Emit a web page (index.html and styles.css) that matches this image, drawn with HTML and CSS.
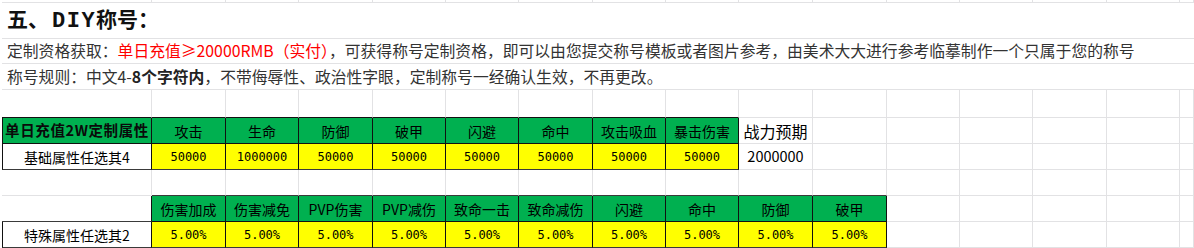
FILE: index.html
```html
<!DOCTYPE html>
<html lang="zh-CN">
<head>
<meta charset="utf-8">
<title>DIY称号</title>
<link rel="stylesheet" href="styles.css">
</head>
<body>
<div class="sheet">
  <!-- row 0 -->
  <div class="c"></div><div class="c"></div><div class="c"></div><div class="c"></div>
  <div class="c"></div><div class="c"></div><div class="c"></div><div class="c"></div>
  <div class="c"></div><div class="c"></div><div class="c"></div><div class="c"></div>
  <div class="c"></div><div class="c"></div><div class="c"></div><div class="c"></div>

  <!-- row 1 -->
  <div class="c full title"><span class="txt">五、<span class="latin">DIY</span>称号：</span></div>
  <!-- row 2 -->
  <div class="c full note"><span class="txt">定制资格获取：<span class="red">单日充值≥20000RMB（实付）</span>，可获得称号定制资格，即可以由您提交称号模板或者图片参考，由美术大大进行参考临摹制作一个只属于您的称号</span></div>
  <!-- row 3 -->
  <div class="c full note"><span class="txt">称号规则：中文4-<b class="strong">8个字符内</b>，不带侮辱性、政治性字眼，定制称号一经确认生效，不再更改。</span></div>

  <!-- row 4 -->
  <div class="c above"></div><div class="c above"></div><div class="c above"></div><div class="c above"></div>
  <div class="c above"></div><div class="c above"></div><div class="c above"></div><div class="c above"></div>
  <div class="c above"></div><div class="c"></div><div class="c"></div><div class="c"></div>
  <div class="c"></div><div class="c"></div><div class="c"></div><div class="c"></div>

  <!-- row 5 -->
  <div class="c hd first key">单日充值2W定制属性</div>
  <div class="c hd">攻击</div>
  <div class="c hd">生命</div>
  <div class="c hd">防御</div>
  <div class="c hd">破甲</div>
  <div class="c hd">闪避</div>
  <div class="c hd">命中</div>
  <div class="c hd">攻击吸血</div>
  <div class="c hd">暴击伤害</div>
  <div class="c forecast">战力预期</div>
  <div class="c"></div><div class="c"></div><div class="c"></div><div class="c"></div><div class="c"></div><div class="c"></div>

  <!-- row 6 -->
  <div class="c lab first end">基础属性任选其4</div>
  <div class="c val end">50000</div>
  <div class="c val end">1000000</div>
  <div class="c val end">50000</div>
  <div class="c val end">50000</div>
  <div class="c val end">50000</div>
  <div class="c val end">50000</div>
  <div class="c val end">50000</div>
  <div class="c val end">50000</div>
  <div class="c power">2000000</div>
  <div class="c"></div><div class="c"></div><div class="c"></div><div class="c"></div><div class="c"></div><div class="c"></div>

  <!-- row 7 -->
  <div class="c"></div>
  <div class="c above2"></div><div class="c above2"></div><div class="c above2"></div><div class="c above2"></div><div class="c above2"></div>
  <div class="c above2"></div><div class="c above2"></div><div class="c above2"></div><div class="c above2"></div><div class="c above2"></div>
  <div class="c"></div><div class="c"></div><div class="c"></div><div class="c"></div><div class="c"></div>

  <!-- row 8 -->
  <div class="c gap"></div>
  <div class="c hd">伤害加成</div>
  <div class="c hd">伤害减免</div>
  <div class="c hd">PVP伤害</div>
  <div class="c hd">PVP减伤</div>
  <div class="c hd">致命一击</div>
  <div class="c hd">致命减伤</div>
  <div class="c hd">闪避</div>
  <div class="c hd">命中</div>
  <div class="c hd">防御</div>
  <div class="c hd">破甲</div>
  <div class="c"></div><div class="c"></div><div class="c"></div><div class="c"></div><div class="c"></div>

  <!-- row 9 -->
  <div class="c lab first end">特殊属性任选其2</div>
  <div class="c val end">5.00%</div>
  <div class="c val end">5.00%</div>
  <div class="c val end">5.00%</div>
  <div class="c val end">5.00%</div>
  <div class="c val end">5.00%</div>
  <div class="c val end">5.00%</div>
  <div class="c val end">5.00%</div>
  <div class="c val end">5.00%</div>
  <div class="c val end">5.00%</div>
  <div class="c val end">5.00%</div>
  <div class="c"></div><div class="c"></div><div class="c"></div><div class="c"></div><div class="c"></div>
</div>
</body>
</html>
```
FILE: styles.css
```css
html, body {
  margin: 0;
  padding: 0;
  background: #ffffff;
  overflow: hidden;
}

body {
  width: 1194px;
  height: 248px;
  font-family: "Noto Sans CJK SC", sans-serif;
  color: #000;
}

.sheet {
  display: grid;
  padding-left: 2px;
  grid-template-columns: 150px 74px 73px 74px 73px 73px 74px 73px 73px 74px 74px 73px 73px 74px 73px 1fr;
  grid-template-rows: 3px 36px 25px 26px 28px 26px 26px 26px 26px 26px;
}

.c {
  box-sizing: border-box;
  border-right: 1px solid #e2e2e4;
  border-bottom: 1px solid #e2e2e4;
  display: flex;
  align-items: center;
  justify-content: center;
  white-space: nowrap;
  min-width: 0;
  font-size: 14px;
  line-height: 1;
}

.txt {
  display: block;
  white-space: nowrap;
}

.full {
  grid-column: 1 / -1;
  border-right: 0;
  justify-content: flex-start;
  padding-left: 5px;
}

.title {
  font-size: 21px;
  font-weight: 700;
  color: #111;
  padding-left: 5px;
  padding-bottom: 1px;
}

.latin {
  font-family: "Liberation Mono", monospace;
  letter-spacing: 1.5px;
  margin-left: 3px;
  font-size: 22px;
}

.note {
  font-size: 15.8px;
  color: #333;
}

.red {
  color: #ff0000;
}

.strong {
  font-weight: 700;
  color: #222;
}

.above {
  border-bottom-color: #111;
}

.above2 {
  border-bottom-color: #3a3a3a;
}

.hd {
  background: #00b050;
  border-right-color: #111;
  border-bottom-color: #111;
  color: #000;
}

.first {
  border-left: 1px solid #111;
}

.key {
  font-weight: 700;
  letter-spacing: 0.6px;
  color: #0a0a0a;
  font-size: 14.5px;
}

.lab {
  background: #fff;
  border-right-color: #111;
  border-bottom-color: #111;
}

.val {
  background: #ffff00;
  border-right-color: #111;
  border-bottom-color: #111;
  font-family: "DejaVu Sans Mono", monospace;
  font-size: 12px;
}

.end {
  border-bottom-color: #3a3a3a;
}

.gap {
  border-right-color: #111;
  border-bottom-color: #3a3a3a;
}

.forecast {
  font-size: 16px;
}

.power {
  font-size: 14.5px;
}
```
